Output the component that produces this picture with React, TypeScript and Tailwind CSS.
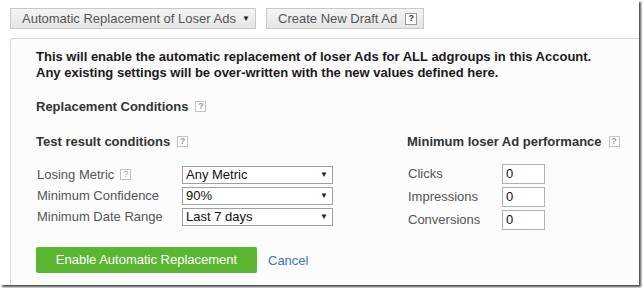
import React from "react";

function Help({ className = "" }: { className?: string }) {
  return (
    <span
      className={
        "inline-flex h-[11px] w-[11px] items-center justify-center border border-[#c4c4c4] bg-white text-[9px] leading-none text-[#999] " +
        className
      }
    >
      ?
    </span>
  );
}

function Select({ value }: { value: string }) {
  return (
    <div className="flex h-[18px] w-[151px] items-center justify-between border border-[#a0a0a0] bg-white pl-[3px] pr-[4px] text-[13px] text-[#111]">
      <span>{value}</span>
      <span className="text-[8px] text-[#222]">▼</span>
    </div>
  );
}

function NumInput() {
  return (
    <div className="flex h-[20px] w-[43px] items-center border border-[#b0b0b0] bg-white pl-[3px] text-[13px] text-[#111]">
      0
    </div>
  );
}

export default function App() {
  const rows = [
    { label: "Losing Metric", help: true, value: "Any Metric" },
    { label: "Minimum Confidence", help: false, value: "90%" },
    { label: "Minimum Date Range", help: false, value: "Last 7 days" },
  ];

  return (
    <div className="h-[288px] w-[644px] bg-white font-['Liberation_Sans',Arial,sans-serif]">
      <div className="h-[285px] w-[639px] overflow-hidden bg-white shadow-[2px_2px_2px_rgba(0,0,0,0.7)]">
        {/* toolbar */}
        <div className="flex gap-[10px] pl-[10px] pt-[8px]">
          <div className="flex h-[21px] w-[246px] items-center gap-[6px] border border-[#c8c8c8] bg-gradient-to-b from-[#f4f4f4] to-[#e6e6e6] pl-[11px] text-[13px] text-[#555]">
            <span>Automatic Replacement of Loser Ads</span>
            <span className="text-[8px] text-[#222]">▼</span>
          </div>
          <div className="flex h-[21px] w-[158px] items-center gap-[8px] border border-[#c8c8c8] bg-gradient-to-b from-[#f4f4f4] to-[#e6e6e6] pl-[11px] text-[13px] text-[#555]">
            <span>Create New Draft Ad</span>
            <span className="inline-flex h-[12px] w-[12px] items-center justify-center border border-[#999] bg-white text-[9px] font-bold leading-none text-[#333]">
              ?
            </span>
          </div>
        </div>

        {/* panel */}
        <div className="ml-[10px] mt-[9px] h-[260px] rounded-tl-[3px] border-l border-t border-[#d8d8d8] bg-[#fcfcfc] pl-[25px] pt-[10px]">
          <p className="text-[13px] font-bold leading-[16px] text-[#1a1a1a]">
            This will enable the automatic replacement of loser Ads for ALL adgroups in this Account.
            <br />
            Any existing settings will be over-written with the new values defined here.
          </p>

          <div className="mt-[16px] flex items-center gap-[7px] text-[13px] font-bold text-[#333]">
            <span>Replacement Conditions</span>
            <Help />
          </div>

          <div className="mt-[15px] flex">
            <div className="w-[371px]">
              <div className="flex items-center gap-[7px] text-[13px] font-bold text-[#333]">
                <span>Test result conditions</span>
                <Help />
              </div>
              <div className="mt-[13px] flex flex-col">
                {rows.map((r) => (
                  <div key={r.label} className="flex h-[21px] items-center leading-[18px]">
                    <div className="flex w-[146px] items-center gap-[6px] pl-[1px] text-[13px] text-[#555]">
                      <span>{r.label}</span>
                      {r.help && <Help />}
                    </div>
                    <Select value={r.value} />
                  </div>
                ))}
              </div>
            </div>

            <div>
              <div className="flex items-center gap-[7px] text-[13px] font-bold text-[#333]">
                <span>Minimum loser Ad performance</span>
                <Help />
              </div>
              <div className="mt-[11px] flex flex-col">
                {["Clicks", "Impressions", "Conversions"].map((l) => (
                  <div key={l} className="flex h-[23px] items-center leading-[18px]">
                    <span className="w-[95px] pl-[1px] text-[13px] text-[#555]">{l}</span>
                    <NumInput />
                  </div>
                ))}
              </div>
            </div>
          </div>

          <div className="mt-[16px] flex items-center gap-[11px]">
            <button className="h-[26px] w-[221px] rounded-[2px] bg-[#5ab530] text-[13px] text-white">
              Enable Automatic Replacement
            </button>
            <span className="pt-[2px] text-[13px] text-[#3b74c9]">Cancel</span>
          </div>
        </div>
      </div>
    </div>
  );
}
